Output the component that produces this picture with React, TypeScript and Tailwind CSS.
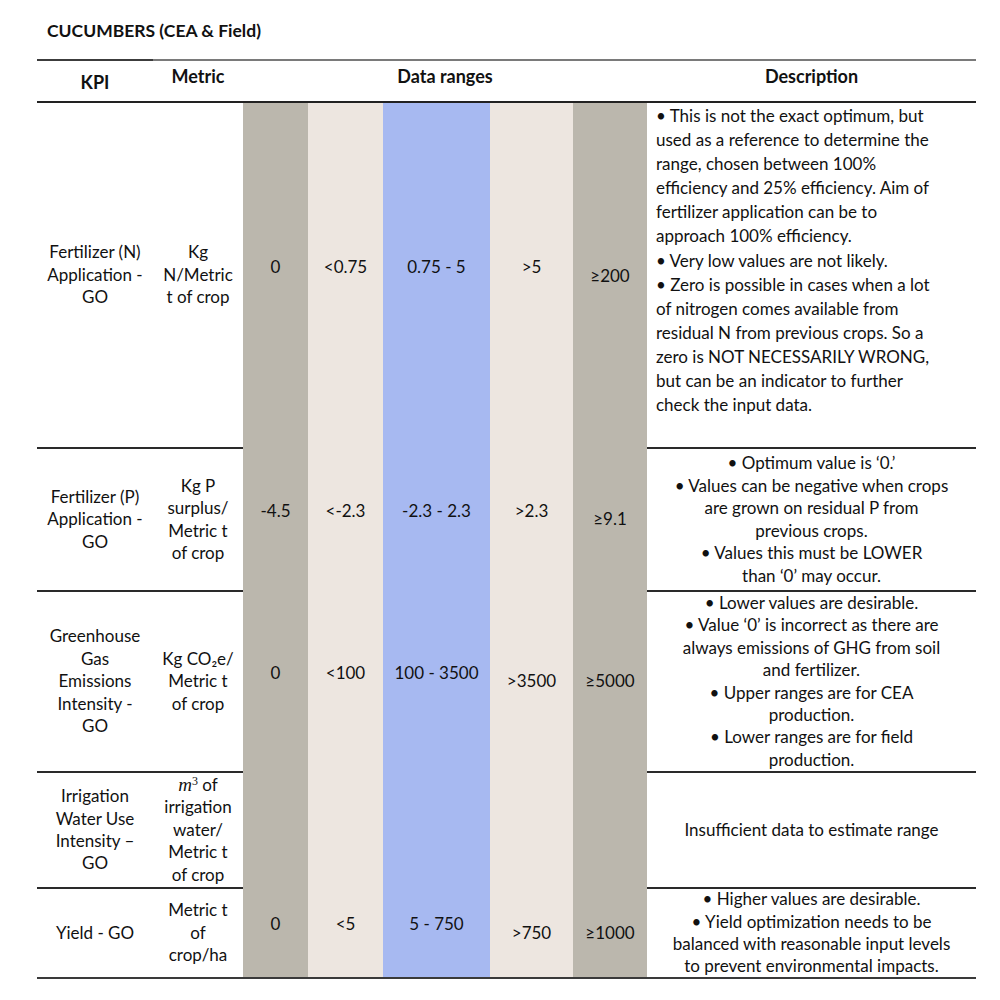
import React from "react"

type Row = {
  kpi: string[]
  metric: React.ReactNode[]
  values: { v: string; low?: boolean }[]
  desc: string[]
  descAlign: "left" | "center"
  descLeading: string
  height: string
}

const colBg = ["bg-[#bbb7ad]", "bg-[#ede6e0]", "bg-[#a7b9f1]", "bg-[#ede6e0]", "bg-[#bbb7ad]"]

const rows: Row[] = [
  {
    kpi: ["Fertilizer (N)", "Application -", "GO"],
    metric: ["Kg", "N/Metric", "t of crop"],
    values: [{ v: "0" }, { v: "<0.75" }, { v: "0.75 - 5" }, { v: ">5" }, { v: "≥200", low: true }],
    desc: [
      "• This is not the exact optimum, but",
      "used as a reference to determine the",
      "range, chosen between 100%",
      "efficiency and 25% efficiency. Aim of",
      "fertilizer application can be to",
      "approach 100% efficiency.",
      "• Very low values are not likely.",
      "• Zero is possible in cases when a lot",
      "of nitrogen comes available from",
      "residual N from previous crops. So a",
      "zero is NOT NECESSARILY WRONG,",
      "but can be an indicator to further",
      "check the input data.",
    ],
    descAlign: "left",
    descLeading: "leading-[24.1px]",
    height: "h-[344px]",
  },
  {
    kpi: ["Fertilizer (P)", "Application -", "GO"],
    metric: ["Kg P", "surplus/", "Metric t", "of crop"],
    values: [{ v: "-4.5" }, { v: "<-2.3" }, { v: "-2.3 - 2.3" }, { v: ">2.3" }, { v: "≥9.1", low: true }],
    desc: [
      "• Optimum value is ‘0.’",
      "• Values can be negative when crops",
      "are grown on residual P from",
      "previous crops.",
      "• Values this must be LOWER",
      "than ‘0’ may occur.",
    ],
    descAlign: "center",
    descLeading: "leading-[22.5px]",
    height: "h-[143px]",
  },
  {
    kpi: ["Greenhouse", "Gas", "Emissions", "Intensity -", "GO"],
    metric: ["Kg CO₂e/", "Metric t", "of crop"],
    values: [{ v: "0" }, { v: "<100" }, { v: "100 - 3500" }, { v: ">3500", low: true }, { v: "≥5000", low: true }],
    desc: [
      "• Lower values are desirable.",
      "• Value ‘0’ is incorrect as there are",
      "always emissions of GHG from soil",
      "and fertilizer.",
      "• Upper ranges are for CEA",
      "production.",
      "• Lower ranges are for field",
      "production.",
    ],
    descAlign: "center",
    descLeading: "leading-[22.4px]",
    height: "h-[181px]",
  },
  {
    kpi: ["Irrigation", "Water Use", "Intensity –", "GO"],
    metric: [
      <span key="m">
        <span className="italic font-['Liberation_Serif',serif] text-[19px]">m</span>
        <sup className="text-[12px] font-['Liberation_Serif',serif]">3</sup> of
      </span>,
      "irrigation",
      "water/",
      "Metric t",
      "of crop",
    ],
    values: [{ v: "" }, { v: "" }, { v: "" }, { v: "" }, { v: "" }],
    desc: ["Insufficient data to estimate range"],
    descAlign: "center",
    descLeading: "leading-[22px]",
    height: "h-[116px]",
  },
  {
    kpi: ["Yield - GO"],
    metric: ["Metric t", "of", "crop/ha"],
    values: [{ v: "0" }, { v: "<5" }, { v: "5 - 750" }, { v: ">750", low: true }, { v: "≥1000", low: true }],
    desc: [
      "• Higher values are desirable.",
      "• Yield optimization needs to be",
      "balanced with reasonable input levels",
      "to prevent environmental impacts.",
    ],
    descAlign: "center",
    descLeading: "leading-[22.4px]",
    height: "h-[92px]",
  },
]

function Lines({ lines, className }: { lines: React.ReactNode[]; className?: string }) {
  return (
    <div className={className}>
      {lines.map((l, i) => (
        <div key={i} className="whitespace-nowrap">{l}</div>
      ))}
    </div>
  )
}

export default function App() {
  return (
    <div className="min-h-[1000px] bg-white text-[#111] font-['Lato','Open_Sans',sans-serif] text-[17px]">
      <div className="pl-[47px] pt-[18px] h-[59px] font-bold text-[17.5px]">CUCUMBERS (CEA &amp; Field)</div>

      <div className="ml-[37px] w-[939px] grid grid-cols-[116px_90px_65px_75px_107px_83px_74px_329px]">
        {/* Header */}
        <div className="h-[44px] border-t-2 border-t-[#3c3c3c] border-b-2 border-b-[#222] flex justify-center items-center pt-[3px] font-bold text-[18px]">
          KPI
        </div>
        <div className="h-[44px] border-t-2 border-t-[#7a7a7a] border-b-2 border-b-[#222] flex justify-center pt-[2px] font-bold text-[18px]">
          Metric
        </div>
        <div className="col-span-5 h-[44px] border-t-2 border-t-[#7a7a7a] border-b-2 border-b-[#222] flex justify-center pt-[2px] font-bold text-[18px]">
          Data ranges
        </div>
        <div className="h-[44px] border-t-2 border-t-[#7a7a7a] border-b-2 border-b-[#222] flex justify-center pt-[2px] font-bold text-[18px]">
          Description
        </div>

        {rows.map((r, ri) => {
          const first = ri === 0
          const last = ri === rows.length - 1
          const line = `${first ? "" : "border-t-2 border-t-[#2a2a2a]"} ${last ? "border-b-2 border-b-[#3a3a3a]" : ""}`
          return (
            <React.Fragment key={ri}>
              <div className={`${r.height} ${line} flex items-center justify-center text-center leading-[22.4px]`}>
                <Lines lines={r.kpi} />
              </div>
              <div className={`${r.height} ${line} flex items-center justify-center text-center leading-[22.4px]`}>
                <Lines lines={r.metric} />
              </div>
              {r.values.map((c, ci) => (
                <div
                  key={ci}
                  className={`${r.height} ${colBg[ci]} ${last ? "border-b-2 border-b-[#3a3a3a]" : ""} flex items-center justify-center whitespace-nowrap ${c.low ? "pt-[1px]" : "pb-[16px]"}`}
                >
                  {c.v}
                </div>
              ))}
              <div
                className={`${r.height} ${line} flex ${r.descAlign === "left" ? "items-start pl-[9px] pt-[1px] text-left" : "items-center justify-center text-center"} ${r.descLeading}`}
              >
                <Lines lines={r.desc} />
              </div>
            </React.Fragment>
          )
        })}
      </div>
    </div>
  )
}
